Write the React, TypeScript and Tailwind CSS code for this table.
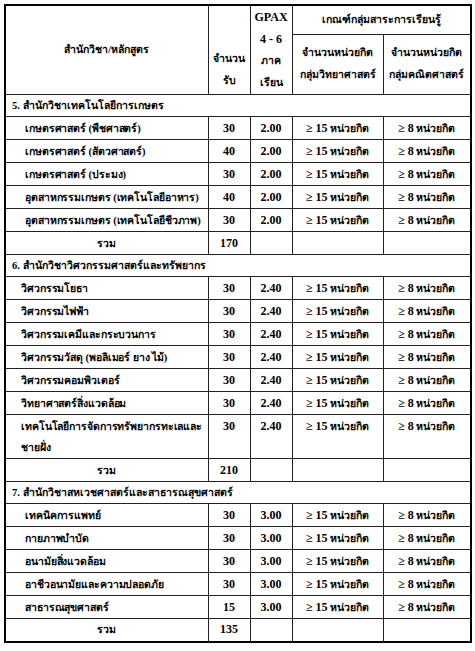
import { Fragment, type ReactNode } from 'react'

type Row = { name: ReactNode; seats: number }
type Section = { title: string; gpax: string; indent: string; rows: Row[]; total: number }

const sections: Section[] = [
  {
    title: '5. สำนักวิชาเทคโนโลยีการเกษตร',
    gpax: '2.00',
    indent: 'pl-[19px]',
    rows: [
      { name: 'เกษตรศาสตร์ (พืชศาสตร์)', seats: 30 },
      { name: 'เกษตรศาสตร์ (สัตวศาสตร์)', seats: 40 },
      { name: 'เกษตรศาสตร์ (ประมง)', seats: 30 },
      { name: 'อุตสาหกรรมเกษตร (เทคโนโลยีอาหาร)', seats: 40 },
      { name: 'อุตสาหกรรมเกษตร (เทคโนโลยีชีวภาพ)', seats: 30 },
    ],
    total: 170,
  },
  {
    title: '6. สำนักวิชาวิศวกรรมศาสตร์และทรัพยากร',
    gpax: '2.40',
    indent: 'pl-[15px]',
    rows: [
      { name: 'วิศวกรรมโยธา', seats: 30 },
      { name: 'วิศวกรรมไฟฟ้า', seats: 30 },
      { name: 'วิศวกรรมเคมีและกระบวนการ', seats: 30 },
      { name: 'วิศวกรรมวัสดุ (พอลิเมอร์ ยาง ไม้)', seats: 30 },
      { name: 'วิศวกรรมคอมพิวเตอร์', seats: 30 },
      { name: 'วิทยาศาสตร์สิ่งแวดล้อม', seats: 30 },
      {
        name: (
          <>
            เทคโนโลยีการจัดการทรัพยากรทะเลและ
            <br />
            ชายฝั่ง
          </>
        ),
        seats: 30,
      },
    ],
    total: 210,
  },
  {
    title: '7. สำนักวิชาสหเวชศาสตร์และสาธารณสุขศาสตร์',
    gpax: '3.00',
    indent: 'pl-[19px]',
    rows: [
      { name: 'เทคนิคการแพทย์', seats: 30 },
      { name: 'กายภาพบำบัด', seats: 30 },
      { name: 'อนามัยสิ่งแวดล้อม', seats: 30 },
      { name: 'อาชีวอนามัยและความปลอดภัย', seats: 30 },
      { name: 'สาธารณสุขศาสตร์', seats: 15 },
    ],
    total: 135,
  },
]

const cell = 'border border-[#222] p-0'
const num = 'text-[12px]'

export default function App() {
  return (
    <div className="bg-white min-h-[651px] pt-1 pl-1 font-['Liberation_Serif','DejaVu_Serif',serif] font-bold text-[10.5px] text-black">
      <table className="table-fixed border-collapse w-[466px] border-2 border-black">
        <colgroup>
          <col className="w-[203px]" />
          <col className="w-[42px]" />
          <col className="w-[42px]" />
          <col className="w-[91px]" />
          <col className="w-[88px]" />
        </colgroup>
        <thead>
          <tr className="h-[29px]">
            <th rowSpan={2} className={`${cell} align-middle text-center`}>
              สำนักวิชา/หลักสูตร
            </th>
            <th rowSpan={2} className={`${cell} align-bottom text-center leading-[22px] pb-[2px]`}>
              <div>จำนวน</div>
              <div>รับ</div>
            </th>
            <th rowSpan={2} className={`${cell} align-top text-center leading-[22px]`}>
              <div className={num}>GPAX</div>
              <div className={num}>4 - 6</div>
              <div>ภาค</div>
              <div>เรียน</div>
            </th>
            <th colSpan={2} className={`${cell} text-center align-middle`}>
              เกณฑ์กลุ่มสาระการเรียนรู้
            </th>
          </tr>
          <tr className="h-[60px]">
            <th className={`${cell} text-center align-middle leading-[22px]`}>
              <div>จำนวนหน่วยกิต</div>
              <div>กลุ่มวิทยาศาสตร์</div>
            </th>
            <th className={`${cell} text-center align-middle leading-[22px]`}>
              <div>จำนวนหน่วยกิต</div>
              <div>กลุ่มคณิตศาสตร์</div>
            </th>
          </tr>
        </thead>
        <tbody>
          {sections.map((s) => (
            <Fragment key={s.title}>
              <tr className="h-[22px]">
                <td colSpan={5} className={`${cell} pl-[6px] align-middle leading-[20px]`}>
                  {s.title}
                </td>
              </tr>
              {s.rows.map((r, i) => (
                <tr key={i} className="h-[23px]">
                  <td className={`${cell} ${s.indent} align-top leading-[21px] pt-px whitespace-nowrap tracking-[-0.1px]`}>
                    {r.name}
                  </td>
                  <td className={`${cell} ${num} text-center align-top leading-[21px] pt-px`}>{r.seats}</td>
                  <td className={`${cell} ${num} text-center align-top leading-[21px] pt-px`}>{s.gpax}</td>
                  <td className={`${cell} text-center align-top leading-[21px] pt-px`}>
                    <span className={num}>≥ 15</span> หน่วยกิต
                  </td>
                  <td className={`${cell} text-center align-top leading-[21px] pt-px`}>
                    <span className={num}>≥ 8</span> หน่วยกิต
                  </td>
                </tr>
              ))}
              <tr className="h-[23px]">
                <td className={`${cell} text-center align-middle leading-[21px]`}>รวม</td>
                <td className={`${cell} ${num} text-center align-middle leading-[21px]`}>{s.total}</td>
                <td className={cell}></td>
                <td className={cell}></td>
                <td className={cell}></td>
              </tr>
            </Fragment>
          ))}
        </tbody>
      </table>
    </div>
  )
}
